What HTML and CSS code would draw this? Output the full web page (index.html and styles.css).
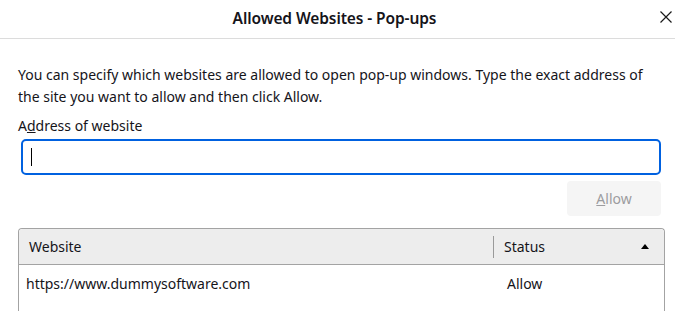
FILE: index.html
```html
<!DOCTYPE html>
<html>
<head>
<meta charset="utf-8">
<link rel="stylesheet" href="styles.css">
</head>
<body>
<div class="dialog">
  <header class="titlebar">
    <div class="title">Allowed Websites - Pop-ups</div>
    <button class="close" aria-label="Close">
      <svg width="12" height="12" viewBox="0 0 12 12"><path d="M0.5 0.5L11.5 11.5M11.5 0.5L0.5 11.5" stroke="#1a1a1a" stroke-width="1.2" fill="none"/></svg>
    </button>
  </header>
  <main class="content">
    <p class="desc">You can specify which websites are allowed to open pop-up windows. Type the exact address of the site you want to allow and then click Allow.</p>
    <label class="label">A<u>d</u>dress of website</label>
    <div class="input"><span class="caret"></span></div>
    <div class="actions"><button class="allow"><u>A</u>llow</button></div>
    <div class="table">
      <div class="thead">
        <div class="th th-site">Website</div>
        <div class="th th-status">Status<span class="sort"></span></div>
      </div>
      <div class="row">
        <div class="td td-site">https://www.dummysoftware.com</div>
        <div class="td td-status">Allow</div>
      </div>
    </div>
  </main>
</div>
</body>
</html>
```
FILE: styles.css
```css
* { box-sizing: border-box; }
html, body { margin: 0; padding: 0; background: #fff; }
body { font-family: "Noto Sans", sans-serif; font-size: 14px; color: #15141a; width: 675px; height: 312px; overflow: hidden; }
.titlebar { height: 39px; border-bottom: 1px solid #dcdcdc; display: flex; align-items: center; justify-content: center; position: relative; }
.title { font-weight: 600; font-size: 15.5px; margin: -2px 6px 0 0; letter-spacing: -0.1px; }
.close { position: absolute; right: 3px; top: 11px; background: none; border: 0; padding: 0; width: 12px; height: 12px; display: flex; }
.content { padding: 0 14px 0 18px; }
.desc { margin: 25px 0 0; line-height: 22px; }
.label { display: block; margin-top: 8px; line-height: 20px; }
.input { margin: 3px 0 0 3px; height: 36px; border: 2px solid #0061e0; border-radius: 5px; display: flex; align-items: center; padding-left: 8px; }
.caret { width: 1px; height: 18px; background: #000; }
.actions { display: flex; justify-content: flex-end; margin-top: 6px; }
.allow { width: 94px; height: 35px; border: 0; border-radius: 4px; background: #f5f5f5; color: #9c9c9f; font-family: inherit; font-size: 14px; }
.table { margin-top: 12px; border: 1px solid #a3a3a3; border-bottom: 0; border-radius: 4px 4px 0 0; width: 647px; height: 83px; }
.thead { display: flex; height: 36px; background: #ededed; border-bottom: 1px solid #a3a3a3; border-radius: 4px 4px 0 0; align-items: center; }
.th-site { width: 474px; padding-left: 10px; }
.th-status { flex: 1; display: flex; align-items: center; border-left: 1px solid #9a9a9a; height: 22px; padding-left: 10px; padding-right: 15px; justify-content: space-between; }
.sort { width: 0; height: 0; border-left: 4px solid transparent; border-right: 4px solid transparent; border-bottom: 5px solid #000; }
.row { display: flex; height: 36px; align-items: center; }
.td-site { width: 475px; padding-left: 7px; }
.td-status { padding-left: 13px; }
```
